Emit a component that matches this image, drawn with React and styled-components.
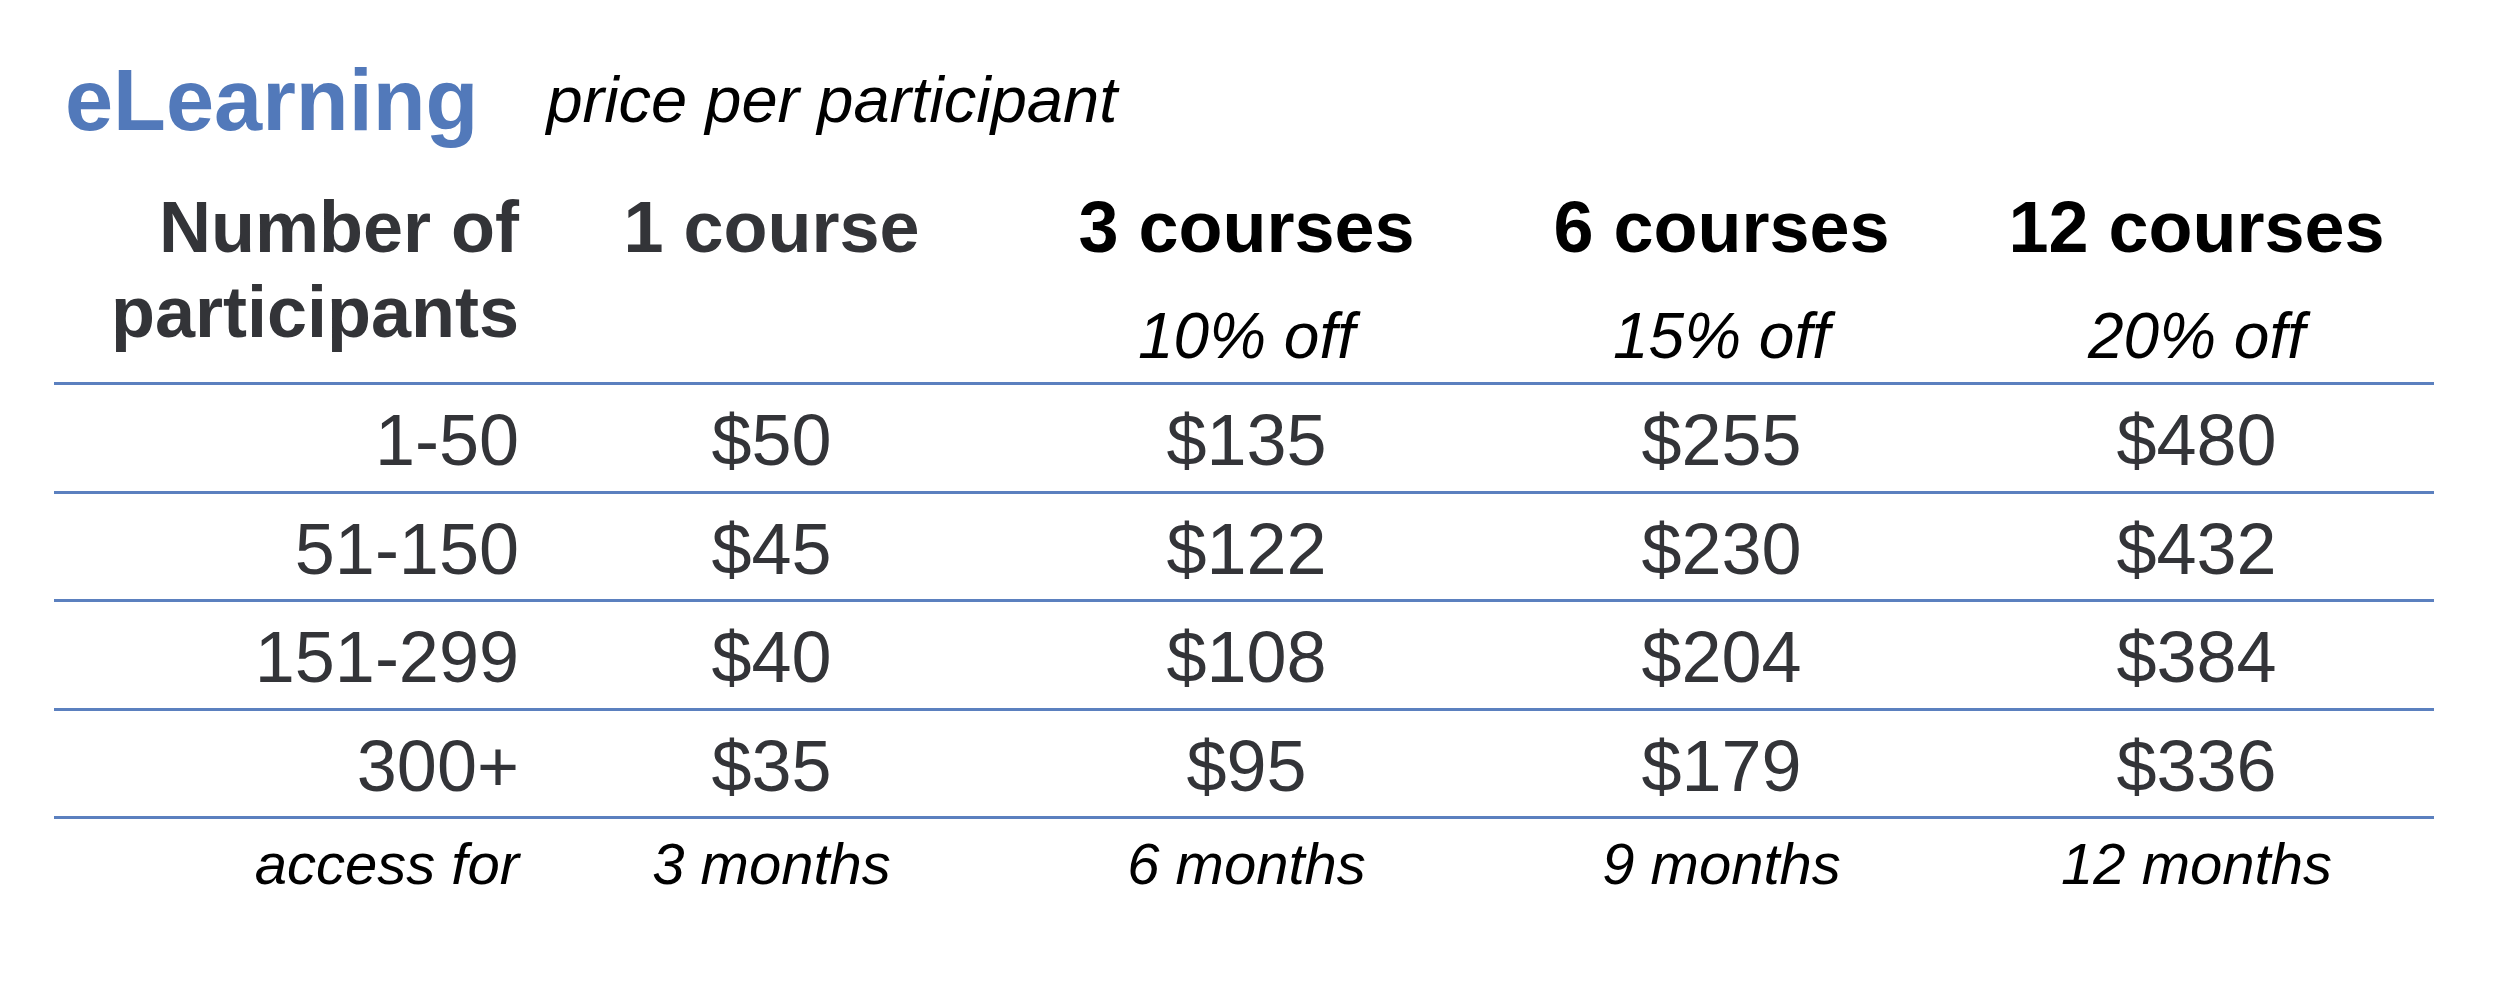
import React from "react";
import styled, { createGlobalStyle } from "styled-components";

const GlobalStyle = createGlobalStyle`
	html, body {
		margin: 0;
		padding: 0;
		background: #ffffff;
	}

	body {
		font-family: "Liberation Sans", Arial, sans-serif;
	}
`;

const plans = [
	{ name: "1 course", discount: null, access: "3 months" },
	{ name: "3 courses", discount: "10% off", access: "6 months" },
	{ name: "6 courses", discount: "15% off", access: "9 months" },
	{ name: "12 courses", discount: "20% off", access: "12 months" },
];

const tiers = [
	{ label: "1-50", prices: ["$50", "$135", "$255", "$480"] },
	{ label: "51-150", prices: ["$45", "$122", "$230", "$432"] },
	{ label: "151-299", prices: ["$40", "$108", "$204", "$384"] },
	{ label: "300+", prices: ["$35", "$95", "$179", "$336"] },
];

const Page = styled.div`
	padding: 50px 0 0 54px;
	width: 2380px;
`;

const TitleRow = styled.div`
	display: flex;
	align-items: flex-start;
	gap: 68px;
	padding-left: 11px;
	height: 100px;
`;

const Title = styled.h1`
	margin: 0;
	font-size: 86.5px;
	line-height: 100px;
	font-weight: 700;
	color: #5279ba;
`;

const Subtitle = styled.span`
	font-size: 65px;
	line-height: 99px;
	font-style: italic;
	color: #000000;
`;

const Table = styled.div`
	margin-top: 35px;
`;

const Row = styled.div`
	display: grid;
	grid-template-columns: 480px repeat(4, 475px);
	border-top: ${({ $ruled }) => ($ruled ? "3px solid #5b80bf" : "none")};
	border-bottom: ${({ $last }) => ($last ? "3px solid #5b80bf" : "none")};
`;

const HeaderRow = styled(Row)`
	height: 197px;
	align-items: start;
`;

const Label = styled.div`
	text-align: right;
	padding-right: 15px;
	font-size: 72px;
	line-height: 85px;
	font-weight: 700;
	color: #333438;
`;

const PlanHead = styled.div`
	display: flex;
	flex-direction: column;
	align-items: center;
`;

const PlanName = styled.div`
	font-size: 72px;
	line-height: 85px;
	font-weight: 700;
	color: ${({ $muted }) => ($muted ? "#333438" : "#000000")};
`;

const Discount = styled.div`
	margin-top: 28px;
	font-size: 64px;
	line-height: 76px;
	font-style: italic;
	color: #000000;
`;

const Cell = styled.div`
	height: 105.5px;
	box-sizing: border-box;
	padding: 6px ${({ $label }) => ($label ? "15px" : "0")} 0 0;
	text-align: ${({ $label }) => ($label ? "right" : "center")};
	font-size: 72px;
	line-height: 99.5px;
	color: #333438;
`;

const Note = styled.div`
	text-align: ${({ $label }) => ($label ? "right" : "center")};
	padding-right: ${({ $label }) => ($label ? "15px" : "0")};
	font-size: 58px;
	line-height: 90px;
	font-style: italic;
	color: #000000;
`;

export default function App() {
	return (
		<>
			<GlobalStyle />
			<Page>
				<TitleRow>
					<Title>eLearning</Title>
					<Subtitle>price per participant</Subtitle>
				</TitleRow>
				<Table>
					<HeaderRow>
						<Label>
							Number of
							<br />
							participants
						</Label>
						{plans.map((plan) => (
							<PlanHead key={plan.name}>
								<PlanName $muted={!plan.discount}>{plan.name}</PlanName>
								{plan.discount && <Discount>{plan.discount}</Discount>}
							</PlanHead>
						))}
					</HeaderRow>
					{tiers.map((tier, i) => (
						<Row key={tier.label} $ruled $last={i === tiers.length - 1}>
							<Cell $label>{tier.label}</Cell>
							{tier.prices.map((price) => (
								<Cell key={price}>{price}</Cell>
							))}
						</Row>
					))}
					<Row>
						<Note $label>access for</Note>
						{plans.map((plan) => (
							<Note key={plan.access}>{plan.access}</Note>
						))}
					</Row>
				</Table>
			</Page>
		</>
	);
}
